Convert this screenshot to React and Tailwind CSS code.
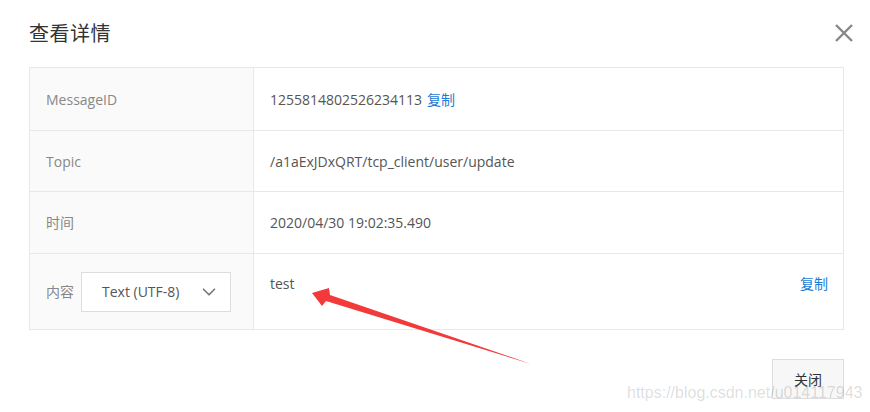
import { ChevronDown } from "lucide-react";

const font = {
    fontFamily: '"Open Sans", "Noto Sans CJK SC", sans-serif',
};

function Row({ label, children, h, top }) {
    return (
        <div className={`flex ${top ? "" : "border-t border-[#e8e8e8]"} ${h}`}>
            <div className="w-[224px] shrink-0 bg-[#fafafa] border-r border-[#e8e8e8] flex items-center pl-4 text-[14px] text-[#888]">
                {label}
            </div>
            <div className="flex-1 flex items-center pl-4 text-[14px] text-[#555]">{children}</div>
        </div>
    );
}

export default function App() {
    return (
        <div className="relative w-[870px] h-[412px] bg-white overflow-hidden" style={font}>
            <div className="flex items-center justify-between pl-[29px] pr-[16px] pt-[19px] h-[48px]">
                <h2 className="text-[20px] text-[#333] leading-[28px] tracking-[0.5px]">查看详情</h2>
                <svg width="20" height="20" viewBox="0 0 20 20" className="mt-[-2px]">
                    <path d="M2 2 L18 18 M18 2 L2 18" stroke="#888" strokeWidth="2.4" />
                </svg>
            </div>

            <div className="mx-[29px] mt-[19px] w-[815px] border border-[#e8e8e8]">
                <Row label="MessageID" h="h-[62px]" top>
                    <span>1255814802526234113</span>
                    <a className="ml-[5px] text-[#1a7bd3] cursor-pointer">复制</a>
                </Row>
                <Row label="Topic" h="h-[61px]">
                    /a1aExJDxQRT/tcp_client/user/update
                </Row>
                <Row label="时间" h="h-[62px]">
                    2020/04/30 19:02:35.490
                </Row>
                <div className="flex h-[76px] border-t border-[#e8e8e8]">
                    <div className="w-[224px] shrink-0 bg-[#fafafa] border-r border-[#e8e8e8] flex items-center pl-4 gap-[7px] text-[14px] text-[#888]">
                        <span>内容</span>
                        <div className="w-[150px] h-[40px] bg-white border border-[#ddd] flex items-center justify-between pl-[20px] pr-[10px] text-[#555]">
                            <span>Text (UTF-8)</span>
                            <ChevronDown size={22} strokeWidth={1.8} color="#777" />
                        </div>
                    </div>
                    <div className="flex-1 flex items-start justify-between pl-4 pr-[15px] pt-[19px] text-[14px] text-[#555]">
                        <span>test</span>
                        <a className="text-[#1a7bd3] cursor-pointer">复制</a>
                    </div>
                </div>
            </div>

            <div className="flex justify-end pr-[26px] mt-[29px]">
                <button className="w-[72px] h-[40px] bg-[#f7f7f7] border border-[#ddd] text-[14px] text-[#333]">
                    关闭
                </button>
            </div>

            <svg className="absolute left-0 top-0 pointer-events-none" width="870" height="412">
                <polygon
                    points="312,293 329,288 330,295 531,364 326,301 322,306"
                    fill="#f23a3a"
                />
            </svg>

            <div
                className="absolute left-[627px] top-[383px] text-[16px] leading-[20px] text-black/15 pointer-events-none whitespace-nowrap"
                style={{ fontFamily: '"Liberation Sans", sans-serif' }}
            >
                https://blog.csdn.net/u014117943
            </div>
        </div>
    );
}
